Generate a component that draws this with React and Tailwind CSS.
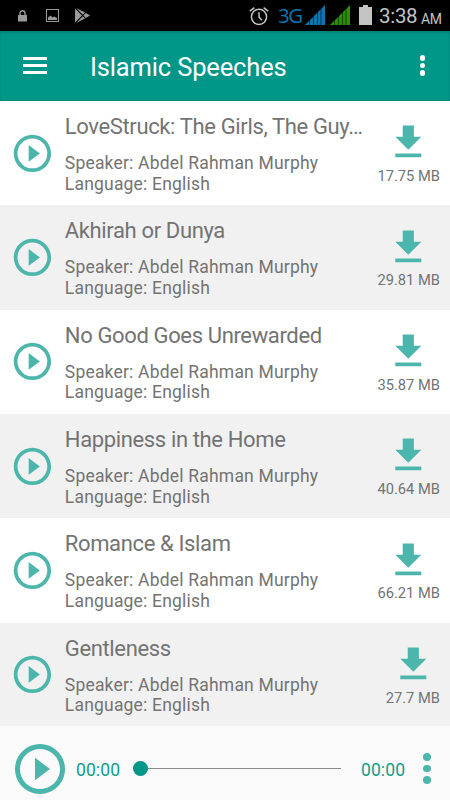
const speeches = [
  { title: "LoveStruck: The Girls, The Guy…", size: "17.75 MB" },
  { title: "Akhirah or Dunya", size: "29.81 MB" },
  { title: "No Good Goes Unrewarded", size: "35.87 MB" },
  { title: "Happiness in the Home", size: "40.64 MB" },
  { title: "Romance & Islam", size: "66.21 MB" },
  { title: "Gentleness", size: "27.7 MB" },
];

function PlayCircle({ className }) {
  return (
    <svg viewBox="0 0 24 24" fill="currentColor" className={className}>
      <path d="M10 16.5l6-4.5-6-4.5v9zM12 2C6.48 2 2 6.48 2 12s4.48 10 10 10 10-4.48 10-10S17.52 2 12 2zm0 18c-4.41 0-8-3.59-8-8s3.59-8 8-8 8 3.59 8 8-3.59 8-8 8z" />
    </svg>
  );
}

function Signal({ className }) {
  return (
    <svg viewBox="0 0 20 20" className={className}>
      <path d="M0 20L20 0V20Z" fill="currentColor" />
      <path d="M4.5 0V20M8.5 0V20M12.5 0V20M16 0V20" stroke="#000" strokeWidth="0.7" opacity="0.75" />
    </svg>
  );
}

function StatusBar() {
  return (
    <div className="flex h-[31px] items-center bg-black pl-[18px] pr-2 text-[#c4c4c4]">
      <svg viewBox="0 0 9 12" className="h-3 w-[9px] text-[#9a9a9a]">
        <rect y="5" width="9" height="6.5" fill="currentColor" />
        <path d="M2 5.5V3.2a2.5 2.5 0 015 0v2.3" fill="none" stroke="currentColor" strokeWidth="1.4" />
      </svg>
      <svg viewBox="0 0 13 13" className="ml-[19px] h-[13px] w-[13px] text-[#9a9a9a]">
        <rect x="0.5" y="0.5" width="12" height="12" fill="none" stroke="currentColor" />
        <path d="M2 11V8.5L4.5 6.5 6.5 8.5 8 7.5 11 9v2z" fill="currentColor" />
      </svg>
      <svg viewBox="0 0 15 15" className="ml-4 h-[15px] w-[15px] text-[#9a9a9a]">
        <path d="M0 0.5L7 7.5 0 14.5zM1.2 0L10 4.6 7.8 6.8zM1.2 15L10 10.4 7.8 8.2zM10.8 5L15 7.5 10.8 10 8.4 7.5z" fill="currentColor" />
      </svg>
      <svg viewBox="0 0 20 20" fill="none" stroke="currentColor" strokeWidth="1.5" className="ml-auto h-5 w-5">
        <circle cx="10" cy="10.8" r="7.6" />
        <path d="M10 6.2V11l2.8 3.2M0.8 5.2L5.4 1.6M19.2 5.2l-4.6-3.6" />
      </svg>
      <span className="ml-[9px] w-[27px] font-['Open_Sans',sans-serif] text-[20.5px] leading-none tracking-[-1.5px] text-[#0b76b0]">
        3G
      </span>
      <Signal className="mb-px h-5 w-5 text-[#0b76b0]" />
      <Signal className="mb-px ml-[5px] h-5 w-5 text-[#2a9000]" />
      <svg viewBox="0 0 13 20" className="mb-px ml-[9px] h-5 w-[13px]">
        <path d="M4 0h5v2h4v18H0V2h4z" fill="currentColor" />
      </svg>
      <span className="ml-[7px] mt-[2px] w-[42px] text-[20.5px] leading-none tracking-[-0.3px]">3:38</span>
      <span className="mt-[7px] w-[21px] text-[14px] leading-none tracking-[-0.4px]">AM</span>
    </div>
  );
}

function AppBar() {
  return (
    <div className="flex h-[70px] items-center border-b border-b-[#00897b] bg-[#009688] pl-[23px] pr-[25px] text-white shadow-[inset_0_2px_2px_rgba(0,0,0,0.12)]">
      <div className="flex w-6 flex-col gap-1">
        {[0, 1, 2].map((i) => (
          <span key={i} className="h-[3px] bg-white" />
        ))}
      </div>
      <h1 className="ml-[43px] mt-[3px] text-[25.5px] leading-8 tracking-[-0.15px]">Islamic Speeches</h1>
      <div className="ml-auto flex flex-col gap-[2.3px]">
        {[0, 1, 2].map((i) => (
          <span key={i} className="h-[5.3px] w-[5.3px] rounded-full bg-white" />
        ))}
      </div>
    </div>
  );
}

function SpeechRow({ title, size }) {
  return (
    <li className="flex h-[104.33px] shrink-0 pl-[10px] pr-[10px] text-[#737373] odd:bg-white even:bg-[#f1f1f1]">
      <PlayCircle className="mt-[29.7px] h-[44.8px] w-[44.8px] shrink-0 text-[#4db6ac]" />
      <div className="ml-[10px] w-[304px] shrink-0 pt-[13px]">
        <h2 className="whitespace-nowrap text-[22px] leading-[26px] tracking-[-0.36px]">{title}</h2>
        <p className="mt-[12.9px] text-[17.5px] leading-[20.67px] tracking-[0.2px]">
          Speaker: Abdel Rahman Murphy
          <br />
          Language: English
        </p>
      </div>
      <div className="ml-auto flex flex-col items-center pt-[19.4px]">
        <svg viewBox="0 0 24 24" fill="#4db6ac" className="h-[44.6px] w-[44.6px]">
          <path d="M19 9h-4V3H9v6H5l7 7 7-7zM5 18v2h14v-2H5z" />
        </svg>
        <span className="mt-[2px] whitespace-nowrap text-[14.7px] leading-[18px]">{size}</span>
      </div>
    </li>
  );
}

function Player() {
  return (
    <div className="flex h-[74px] items-center bg-[#fafafa] pl-[10px] pr-[19px] pt-[11px] text-[17.5px] text-[#149d90]">
      <PlayCircle className="h-[60px] w-[60px] shrink-0 text-[#4db6ac]" />
      <span className="ml-[6px] mt-[2px] w-[57px] leading-5 tracking-[0.1px]">00:00</span>
      <div className="flex w-[208px] items-center">
        <span className="h-[15px] w-[15px] rounded-full bg-[#009688]" />
        <span className="h-px flex-1 bg-[#8c8c8c]" />
      </div>
      <span className="ml-5 mt-[2px] leading-5 tracking-[0.1px]">00:00</span>
      <div className="ml-auto flex flex-col gap-[3.7px]">
        {[0, 1, 2].map((i) => (
          <span key={i} className="h-[7.6px] w-[7.6px] rounded-full bg-[#4db6ac]" />
        ))}
      </div>
    </div>
  );
}

export default function App() {
  return (
    <div className="flex h-[800px] w-[450px] flex-col overflow-hidden bg-white font-[Roboto,sans-serif]">
      <StatusBar />
      <AppBar />
      <ul className="flex h-[625px] flex-col overflow-hidden">
        {speeches.map((speech) => (
          <SpeechRow key={speech.title} {...speech} />
        ))}
      </ul>
      <Player />
    </div>
  );
}
